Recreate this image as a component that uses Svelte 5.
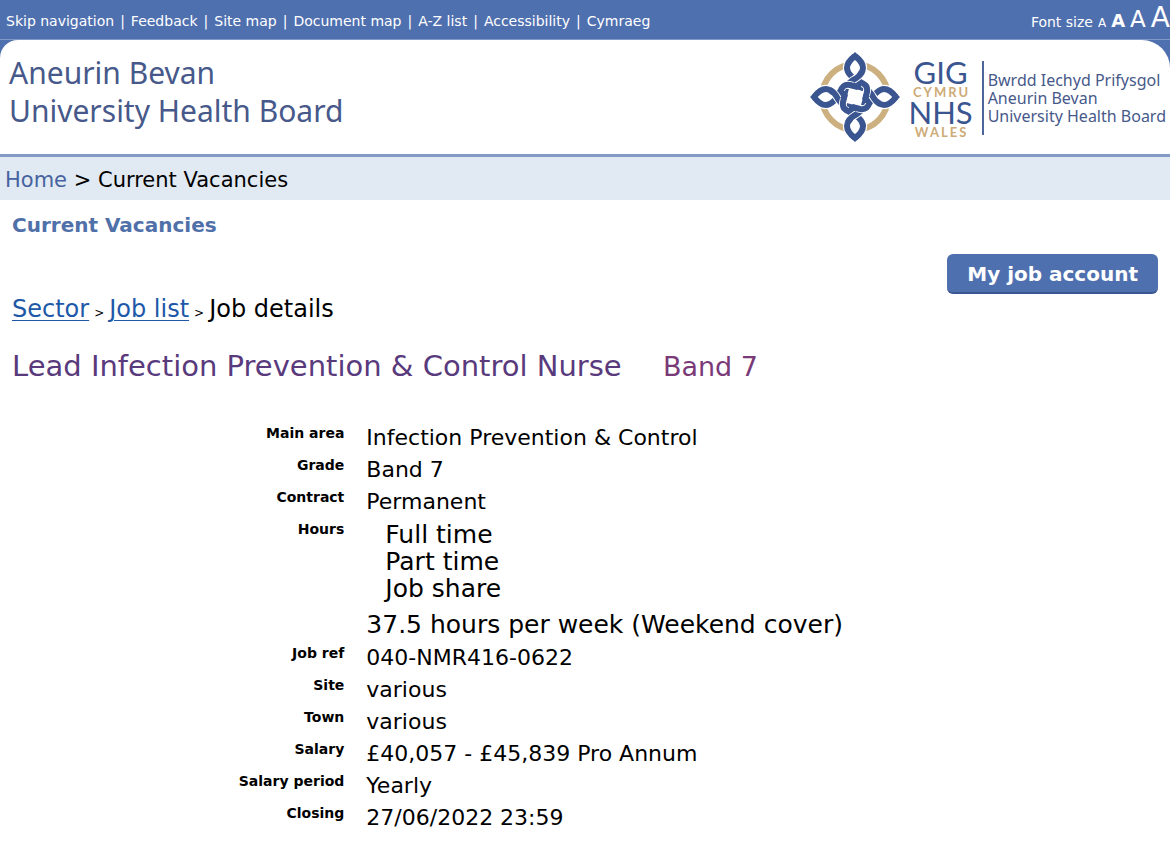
<script lang="ts">
  const siteLinks = ['Skip navigation', 'Feedback', 'Site map', 'Document map', 'A-Z list', 'Accessibility', 'Cymraeg'];

  const sizes = [
    { name: 'small', label: 'Small text' },
    { name: 'normal', label: 'Normal text' },
    { name: 'large', label: 'Large text' },
    { name: 'largest', label: 'Largest text' }
  ];

  const hours = ['Full time', 'Part time', 'Job share'];

  const details = [
    { term: 'Main area', value: 'Infection Prevention & Control' },
    { term: 'Grade', value: 'Band 7' },
    { term: 'Contract', value: 'Permanent' },
    { term: 'Hours', value: '37.5 hours per week (Weekend cover)', list: hours },
    { term: 'Job ref', value: '040-NMR416-0622' },
    { term: 'Site', value: 'various' },
    { term: 'Town', value: 'various' },
    { term: 'Salary', value: '£40,057 - £45,839 Pro Annum' },
    { term: 'Salary period', value: 'Yearly' },
    { term: 'Closing', value: '27/06/2022 23:59' }
  ];

  // the knot is one strand turned four times; "over" is where it passes on top
  const strand = 'M0 -41 C4 -38 8 -34 8 -29 C8 -24 3 -20 -2 -17 C-8 -13 -9 -9 -10 -5 L-12 5 C-13 11 -10 13 -5 15 C2 18 8 24 8 29 C8 34 4 38 0 41';
  const over = [
    { casing: 'M4 -21 L-6 -14', line: 'M7 -25 C5 -21 2 -19 -2 -17 C-5 -15 -7 -13 -8 -11' },
    { casing: 'M-11 2 L-12 6 C-13 10 -11 13 -7 14', line: 'M-10 -3 L-12 5 C-13 11 -10 13 -5 15' }
  ];
  const turns = [0, 90, 180, 270];
</script>

<div class="topbar">
  <nav class="site-links">
    {#each siteLinks as link, i}
      {#if i > 0}<span class="bar">|</span>{/if}<a href="#top">{link}</a>
    {/each}
  </nav>
  <div class="font-size">
    <span>Font size</span>
    {#each sizes as size}
      <a class={size.name} href="#top" aria-label={size.label}>A</a>
    {/each}
  </div>
</div>

<div class="header-wrap">
  <header>
    <div class="board">Aneurin Bevan<br />University Health Board</div>
    <div class="logo">
      <svg class="knot" viewBox="-46 -46 92 92" width="92" height="92" aria-hidden="true">
        <circle r="33" fill="none" stroke="#cdb080" stroke-width="6" />
        <!-- clear the ring behind each loop -->
        {#each turns as turn}
          <path transform="rotate({turn})" d="M0 -45 C9 -39 13 -34 12 -28 C11 -23 8 -20 4 -17 L-4 -17 C-8 -20 -11 -23 -12 -28 C-13 -34 -9 -39 0 -45Z" fill="#fff" />
        {/each}
        {#each turns as turn}
          <path transform="rotate({turn})" d={strand} fill="none" stroke="#3a5590" stroke-width="6" />
        {/each}
        {#each over as piece}
          {#each turns as turn}
            <g transform="rotate({turn})" fill="none">
              <path d={piece.casing} stroke="#fff" stroke-width="8" />
              <path d={piece.line} stroke="#3a5590" stroke-width="6" />
            </g>
          {/each}
        {/each}
        {#each turns as turn}
          <path transform="rotate({turn})" d="M0 -45 L5 -40 L2 -37 L0 -38 L-2 -37 L-5 -40Z" fill="#3a5590" />
        {/each}
      </svg>
      <div class="nhs">
        <span class="big">GIG</span>
        <span class="tan">CYMRU</span>
        <span class="big">NHS</span>
        <span class="tan">WALES</span>
      </div>
      <div class="welsh">
        Bwrdd Iechyd Prifysgol<br />Aneurin Bevan<br />University Health Board
      </div>
    </div>
  </header>
</div>

<div class="crumbs"><a href="#top">Home</a> &gt; Current Vacancies</div>

<main>
  <h2>Current Vacancies</h2>
  <div class="account">
    <button type="button">My job account</button>
  </div>
  <div class="trail">
    <a href="#top">Sector</a><span class="sep">&gt;</span><a href="#top">Job list</a><span class="sep">&gt;</span><span>Job details</span>
  </div>
  <h1>Lead Infection Prevention &amp; Control Nurse <span class="band">Band 7</span></h1>

  <dl>
    {#each details as row}
      <dt>{row.term}</dt>
      <dd class:hours={row.list}>
        {#if row.list}
          <ul>
            {#each row.list as item}
              <li>{item}</li>
            {/each}
          </ul>
        {/if}
        {row.value}
      </dd>
    {/each}
  </dl>
</main>

<style>
  :global(body) {
    background: #fff;
    color: #000;
    font-family: Verdana, 'DejaVu Sans', sans-serif;
  }

  .topbar {
    display: flex;
    justify-content: space-between;
    height: 39px;
    background: #4f70af;
    border-bottom: 1px solid #7f98c8;
    color: #fff;
    font-size: 14px;
    white-space: nowrap;
    overflow: hidden;
  }

  .topbar a {
    color: #fff;
    text-decoration: none;
  }

  .site-links {
    padding-left: 6px;
    line-height: 42px;
  }

  .bar {
    margin: 0 6px;
  }

  .font-size {
    display: flex;
    align-items: baseline;
    gap: 5px;
    line-height: 36px;
  }

  .small { font-size: 12px; }
  .normal { font-size: 18px; font-weight: bold; }
  .large { font-size: 23px; }
  .largest { font-size: 28px; }

  .header-wrap {
    background: #4f70af;
  }

  header {
    display: flex;
    justify-content: space-between;
    height: 114px;
    background: #fff;
    border-bottom: 3px solid #839bc4;
    border-radius: 18px 28px 0 0;
    color: #47598a;
    font-family: 'Noto Sans', sans-serif;
  }

  .board {
    padding: 14px 0 0 9px;
    font-size: 30px;
    line-height: 38px;
  }

  .logo {
    display: flex;
    padding: 11px 4px 0 0;
  }

  .nhs {
    display: flex;
    flex-direction: column;
    align-items: center;
    margin: 7px 9px 0 7px;
    color: #3a5590;
    font-family: Lato, sans-serif;
  }

  .big {
    font-size: 31px;
    line-height: 28px;
  }

  .tan {
    padding-left: 2px;
    color: #cdab76;
    font-size: 13px;
    font-weight: bold;
    letter-spacing: 2px;
    line-height: 12px;
  }

  .welsh {
    height: 54px;
    margin-top: 10px;
    padding: 10px 0 10px 4px;
    border-left: 2px solid #4c659b;
    font-size: 16px;
    line-height: 18px;
    white-space: nowrap;
  }

  .crumbs {
    padding: 3px 5px 0;
    background: #e1eaf3;
    font-size: 21px;
    line-height: 40px;
  }

  .crumbs a {
    color: #47639f;
    text-decoration: none;
  }

  main {
    padding: 12px 12px 30px;
  }

  h2 {
    margin: 0;
    color: #4f70a8;
    font-size: 20px;
    line-height: 26px;
  }

  .account {
    display: flex;
    justify-content: flex-end;
    margin-top: 16px;
  }

  button {
    height: 40px;
    padding: 1px 20px 0;
    border: none;
    border-bottom: 2px solid #3b5690;
    border-radius: 6px;
    background: #4f70af;
    color: #fff;
    font-family: inherit;
    font-size: 20px;
    font-weight: bold;
  }

  .trail {
    display: flex;
    align-items: baseline;
    font-size: 24px;
    line-height: 30px;
  }

  .trail a {
    color: #2058a8;
    text-decoration-thickness: 1px;
    text-underline-offset: 3px;
  }

  .sep {
    margin: 0 5px;
    font-size: 12px;
  }

  h1 {
    margin: 18px 0 0;
    color: #593a7c;
    font-size: 29px;
    font-weight: normal;
    line-height: 40px;
  }

  .band {
    margin-left: 32px;
    color: #7a3a78;
    font-size: 27px;
  }

  dl {
    display: grid;
    grid-template-columns: 29% 1fr;
    column-gap: 22px;
    margin: 35px 0 0;
  }

  dt {
    font-size: 14px;
    font-weight: bold;
    line-height: 22px;
    text-align: right;
  }

  dd {
    margin: 0;
    font-size: 22px;
    line-height: 32px;
  }

  .hours {
    padding-bottom: 1px;
    font-size: 25px;
  }

  ul {
    margin: 3px 0 7px;
    padding: 0 0 0 19px;
    line-height: 27px;
    list-style: none;
  }
</style>
